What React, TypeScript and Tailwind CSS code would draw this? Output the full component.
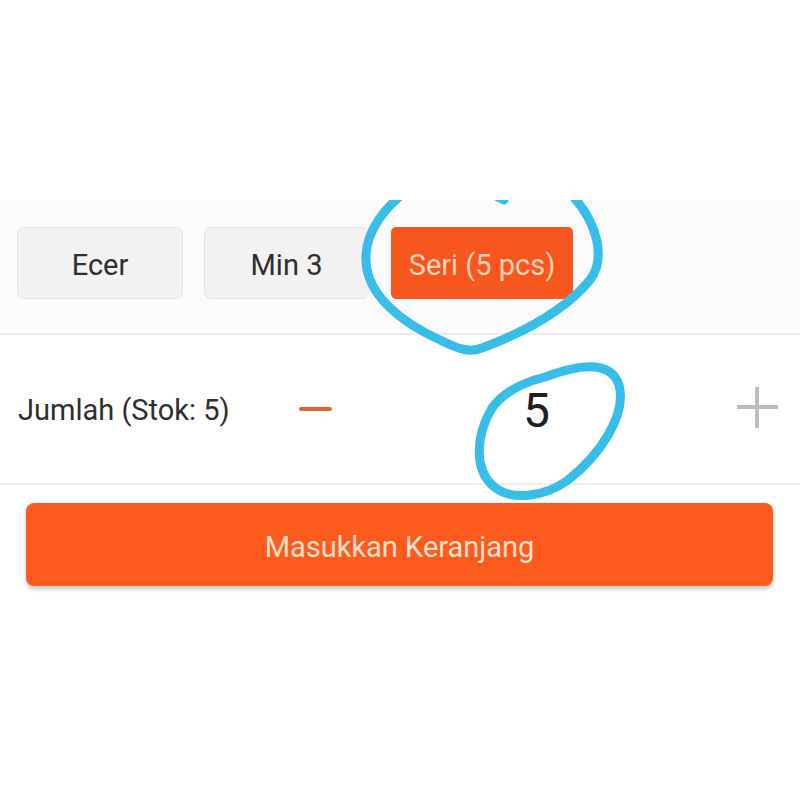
import React from "react";

const font = { fontFamily: "Roboto, 'Noto Sans', Arial, sans-serif" };

export default function App() {
  return (
    <div className="relative w-[800px] h-[800px] bg-white overflow-hidden" style={font}>
      <div className="h-[200px] bg-white" />
      {/* options */}
      <div className="bg-[#fbfbfb] pt-[27px] pb-[34px] pl-[17px] flex gap-[21px] border-b-2 border-[#ececec]">
        <div className="w-[166px] h-[72px] pt-[6px] rounded-[7px] bg-[#f2f2f2] border border-[#e2e2e2] flex items-center justify-center text-[29px] text-[#2e2e2e]">
          Ecer
        </div>
        <div className="w-[165px] h-[72px] pt-[6px] rounded-[7px] bg-[#f2f2f2] border border-[#e2e2e2] flex items-center justify-center text-[29px] text-[#2e2e2e]">
          Min 3
        </div>
        <div className="ml-[1px] w-[182px] h-[72px] pt-[6px] rounded-[5px] bg-[#f7571f] flex items-center justify-center text-[29px] text-[#fdd2b8]">
          Seri (5 pcs)
        </div>
      </div>
      {/* quantity */}
      <div className="h-[150px] bg-white border-b-2 border-[#eeeeee] flex items-center pl-[18px] pr-[22px]">
        <div className="w-[281px] text-[29px] text-[#2e2e2e] leading-none mt-[2px]">Jumlah (Stok: 5)</div>
        <div className="w-[33px] h-[4px] bg-[#dc6230] rounded-sm -mt-[1px]" />
        <div className="flex-1 flex justify-center pl-[4px] text-[48px] text-[#1f1f1f] leading-none mt-[4px]">5</div>
        <div className="relative w-[41px] h-[41px] -mt-[4px]">
          <div className="absolute left-0 top-[18px] w-[41px] h-[4px] bg-[#bdbdbd]" />
          <div className="absolute top-0 left-[18px] w-[4px] h-[41px] bg-[#bdbdbd]" />
        </div>
      </div>
      {/* add to cart */}
      <div className="pt-[18px] pl-[26px] pr-[27px]">
        <div className="h-[83px] pt-[6px] rounded-[8px] bg-[#fd5a1e] shadow-[0_3px_4px_rgba(0,0,0,0.22)] flex items-center justify-center text-[29px] text-[#fde0cb]">
          Masukkan Keranjang
        </div>
      </div>
      {/* annotations */}
      <svg className="absolute left-0 top-0 pointer-events-none" width="800" height="800" viewBox="0 0 800 800">
        <defs>
          <clipPath id="clipTop">
            <rect x="0" y="200" width="800" height="600" />
          </clipPath>
        </defs>
        <g clipPath="url(#clipTop)" fill="none" stroke="#36bde8" strokeWidth="9" strokeLinecap="round" strokeLinejoin="round">
          <path d="M 414 186 C 386 204, 364 232, 366 262 C 368 295, 400 322, 440 340 C 458 349, 470 353, 482 348 C 525 332, 565 310, 590 280 C 605 260, 600 225, 570 193" />
          <path d="M 494 195 L 504 200" />
          <path d="M 545 377 C 575 366, 610 358, 619 385 C 627 415, 600 455, 568 480 C 545 497, 510 502, 492 485 C 474 468, 476 435, 492 408 C 505 390, 525 382, 545 377" />
        </g>
      </svg>
    </div>
  );
}
